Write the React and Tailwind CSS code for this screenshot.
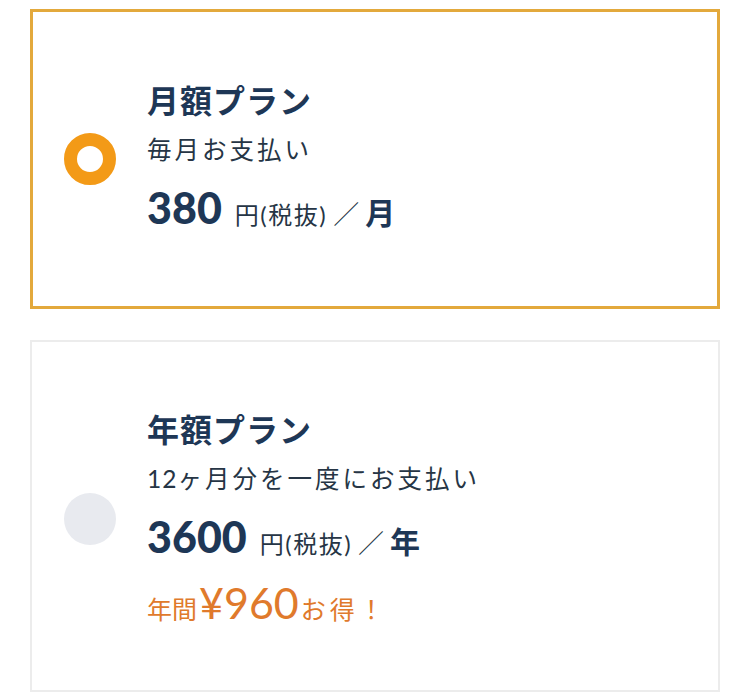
export default function App() {
  const font = { fontFamily: 'Lato, "Noto Sans CJK JP", sans-serif' };
  return (
    <div className="w-[750px] h-[699px] bg-white px-[30px] pt-[9px] text-[#1e3756]" style={font}>
      <div className="h-[300px] border-[3px] border-[#e3a93c] flex items-center pl-[31px]">
        <div className="w-[52px] h-[52px] rounded-full border-[13px] border-[#f39a17] shrink-0" />
        <div className="ml-[31px] flex flex-col">
          <div className="h-[50px] flex items-center text-[32px] font-bold tracking-[1px]">月額プラン</div>
          <div className="h-[48px] flex items-center text-[24.5px] tracking-[3px] text-[#263545]">毎月お支払い</div>
          <div className="h-[68px] flex items-baseline pt-[2px]">
            <span className="text-[43px] font-black">380</span>
            <span className="text-[24px] ml-[13px] tracking-[1.5px] text-[#263545]">円(税抜)</span>
            <span className="text-[26px] ml-[6px] font-light text-[#263545]">／</span>
            <span className="text-[30px] font-bold ml-[6px]">月</span>
          </div>
        </div>
      </div>
      <div className="h-[352px] mt-[31px] border-2 border-[#ececec] flex items-center pl-[32px] pt-[6px]">
        <div className="w-[52px] h-[52px] rounded-full bg-[#e8eaef] shrink-0" />
        <div className="ml-[31px] flex flex-col">
          <div className="h-[50px] flex items-center text-[32px] font-bold tracking-[1px]">年額プラン</div>
          <div className="h-[48px] flex items-center text-[24.5px] tracking-[3px] text-[#263545]">
            <span className="tracking-[1px]">12</span>ヶ月分を一度にお支払い
          </div>
          <div className="h-[68px] flex items-baseline pt-[2px]">
            <span className="text-[43px] font-black">3600</span>
            <span className="text-[24px] ml-[13px] tracking-[1.5px] text-[#263545]">円(税抜)</span>
            <span className="text-[26px] ml-[6px] font-light text-[#263545]">／</span>
            <span className="text-[30px] font-bold ml-[6px]">年</span>
          </div>
          <div className="h-[62px] flex items-baseline pt-[0px] text-[#e07a2c]">
            <span className="text-[25px]">年間</span>
            <span className="text-[43px] ml-[2px]">¥960</span>
            <span className="text-[25px] tracking-[4px] ml-[2px]">お得！</span>
          </div>
        </div>
      </div>
    </div>
  );
}
